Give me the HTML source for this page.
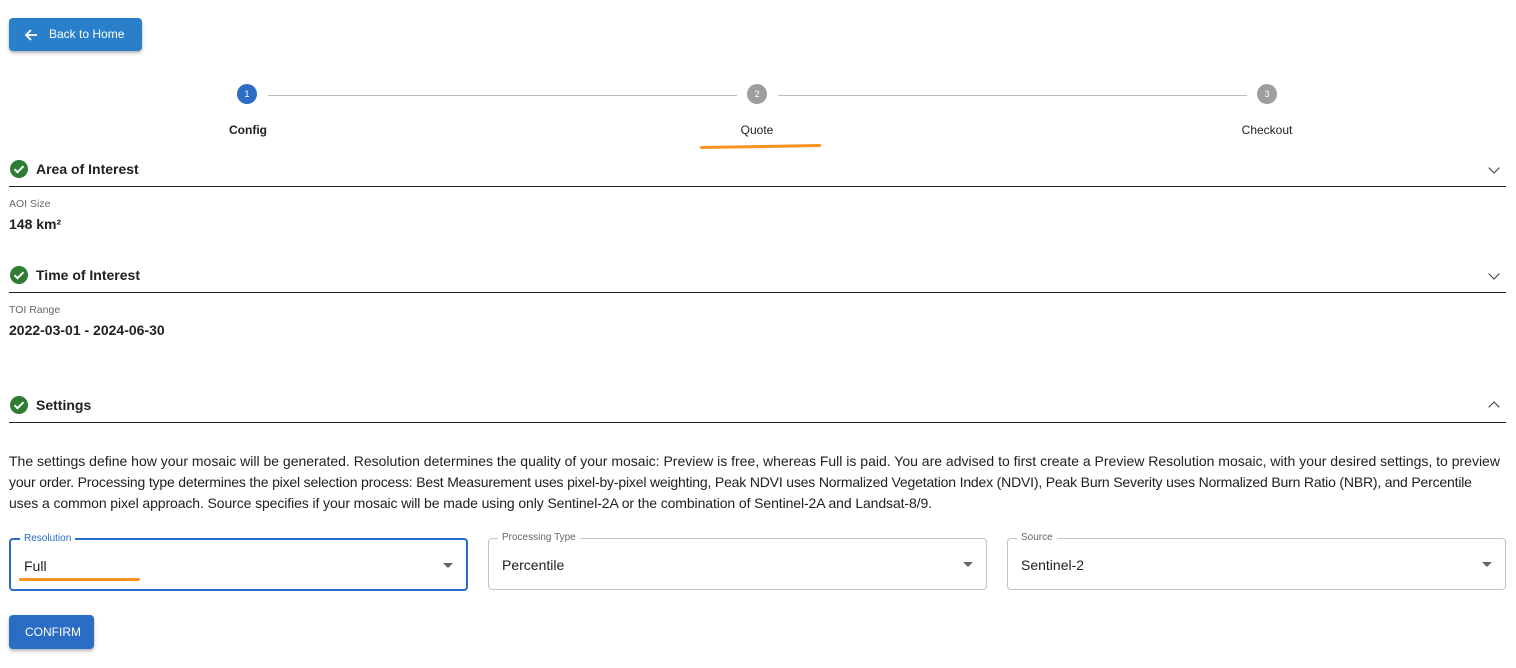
<!DOCTYPE html><html><head><style>
body{margin:0;width:1516px;height:668px;background:#fff;font-family:"Liberation Sans",sans-serif;color:#212121;position:relative;overflow:hidden}
.a{position:absolute}
.btn{background:#2a7fca;color:#fff;border-radius:4px;box-shadow:0 2px 3px rgba(0,0,0,.3);font-size:12px}
.circ{width:20px;height:20px;border-radius:50%;color:#fff;font-size:9px;text-align:center;line-height:20px}
.sl{font-size:12px;transform:translateX(-50%)}
.hd{font-size:14px;font-weight:bold}
.ln{height:1px;background:#222;left:9px;width:1497px}
.chev{width:7px;height:7px;border-right:1.8px solid #333;border-bottom:1.8px solid #333}
.sm{font-size:10.5px;color:#666}
.val{font-size:14px;font-weight:bold;color:#222}
.sel{border:1px solid #c4c4c4;border-radius:4px;height:50px;font-size:14px}
.sel .t{position:absolute;left:13px;top:18px}
.sel .l{position:absolute;left:9px;top:-7px;background:#fff;padding:0 4px;font-size:10px;color:#666}
.sel .ar{position:absolute;right:13px;top:23px;width:0;height:0;border-left:5px solid transparent;border-right:5px solid transparent;border-top:5px solid #666}
.p{font-size:14px;white-space:nowrap;left:9px}
</style></head><body>
<div class="a btn" style="left:9px;top:18px;width:133px;height:33px">
<svg class="a" style="left:14px;top:9px" width="16" height="16" viewBox="0 0 16 16"><path d="M14 8H3M8 3L3 8l5 5" stroke="#fff" stroke-width="1.8" fill="none"/></svg>
<span class="a" style="left:40px;top:9px">Back to Home</span></div>

<div class="a" style="left:268px;top:95px;width:469px;height:1px;background:#bdbdbd"></div>
<div class="a" style="left:778px;top:95px;width:469px;height:1px;background:#bdbdbd"></div>
<div class="a circ" style="left:237px;top:84px;background:#2b6cc4">1</div>
<div class="a circ" style="left:747px;top:84px;background:#9e9e9e">2</div>
<div class="a circ" style="left:1257px;top:84px;background:#9e9e9e">3</div>
<div class="a sl" style="left:248px;top:123px;font-weight:bold">Config</div>
<div class="a sl" style="left:757px;top:123px">Quote</div>
<div class="a sl" style="left:1267px;top:123px">Checkout</div>
<div class="a" style="left:700px;top:145px;width:121px;height:3px;background:#f7931e;border-radius:2px;transform:rotate(-1deg)"></div>

<svg width="0" height="0" style="position:absolute"><defs><g id="ck"><circle cx="9" cy="9" r="9" fill="#2e7d32"/><path d="M4.5 9.2l3 3 6-6" stroke="#fff" stroke-width="2" fill="none"/></g></defs></svg>

<svg class="a" style="left:10px;top:160px" width="18" height="18"><use href="#ck"/></svg>
<div class="a hd" style="left:36px;top:161px">Area of Interest</div>
<div class="a chev" style="left:1490px;top:164px;transform:rotate(45deg)"></div>
<div class="a ln" style="top:186px"></div>
<div class="a sm" style="left:9px;top:198px">AOI Size</div>
<div class="a val" style="left:9px;top:216px">148 km²</div>

<svg class="a" style="left:10px;top:266px" width="18" height="18"><use href="#ck"/></svg>
<div class="a hd" style="left:36px;top:267px">Time of Interest</div>
<div class="a chev" style="left:1490px;top:270px;transform:rotate(45deg)"></div>
<div class="a ln" style="top:292px"></div>
<div class="a sm" style="left:9px;top:304px">TOI Range</div>
<div class="a val" style="left:9px;top:322px">2022-03-01 - 2024-06-30</div>

<svg class="a" style="left:10px;top:396px" width="18" height="18"><use href="#ck"/></svg>
<div class="a hd" style="left:36px;top:397px">Settings</div>
<div class="a chev" style="left:1490px;top:403px;transform:rotate(-135deg)"></div>
<div class="a ln" style="top:422px"></div>
<div class="a p" style="top:453px">The settings define how your mosaic will be generated. Resolution determines the quality of your mosaic: Preview is free, whereas Full is paid. You are advised to first create a Preview Resolution mosaic, with your desired settings, to preview</div>
<div class="a p" style="top:474px;letter-spacing:-0.18px">your order. Processing type determines the pixel selection process: Best Measurement uses pixel-by-pixel weighting, Peak NDVI uses Normalized Vegetation Index (NDVI), Peak Burn Severity uses Normalized Burn Ratio (NBR), and Percentile</div>
<div class="a p" style="top:495px;letter-spacing:-0.1px">uses a common pixel approach. Source specifies if your mosaic will be made using only Sentinel-2A or the combination of Sentinel-2A and Landsat-8/9.</div>

<div class="a sel" style="left:9px;top:538px;width:455px;border:2px solid #2b6cc4;height:49px"><span class="l" style="color:#2b6cc4">Resolution</span><span class="t">Full</span><span class="ar"></span></div>
<div class="a" style="left:19px;top:578px;width:121px;height:3px;background:#f7931e;border-radius:2px"></div>
<div class="a sel" style="left:488px;top:538px;width:497px"><span class="l">Processing Type</span><span class="t">Percentile</span><span class="ar"></span></div>
<div class="a sel" style="left:1007px;top:538px;width:497px"><span class="l">Source</span><span class="t">Sentinel-2</span><span class="ar"></span></div>

<div class="a btn" style="left:9px;top:615px;width:85px;height:34px;background:#2b6cc4"><span class="a" style="left:16px;top:10px">CONFIRM</span></div>
</body></html>
